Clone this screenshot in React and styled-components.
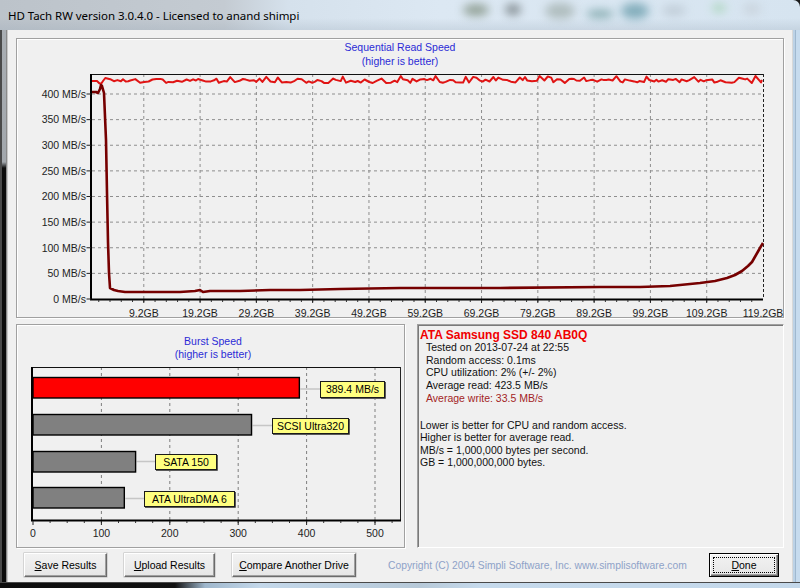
// Packages
import React from "react"
import styled, { createGlobalStyle } from "styled-components"

// Data
const rng = seed => {
    let s = seed
    return () => {
        s = (s * 1103515245 + 12345) % 2147483648
        return s / 2147483648
    }
}

const X0 = 92
const X1 = 763
const Y0 = 299
const YT = 74
const gbX = gb => X0 + (gb * (X1 - X0)) / 119.2
const mbY = mb => Y0 - mb * 0.5125

const readPoints = (() => {
    const r = rng(1234)
    const pts = [
        [92, 81],
        [97, 81],
        [99, 83],
        [101, 84],
        [103, 81],
    ]
    let x = 103
    while (x < 760) {
        x += 2 + r() * 3
        let y = 80.8 + (r() - 0.5) * 4.5
        if (r() < 0.1) y = 76 + r() * 2
        pts.push([Math.min(x, 761), y])
    }
    pts.push([762, 80])
    return pts
})()

const writePoints = [
    [92, 92], [96, 92], [98, 93], [100, 89], [101, 85], [102, 86], [104, 93],
    [106, 140], [107, 193], [108, 242], [109, 273], [110, 288], [114, 290],
    [118, 291], [125, 292], [150, 292], [180, 292], [195, 291], [200, 290],
    [203, 292], [210, 291], [240, 291], [270, 290], [300, 290], [340, 289],
    [400, 288], [500, 288], [600, 287], [640, 287], [670, 286], [700, 283],
    [715, 281], [727, 278], [735, 275], [742, 271], [748, 266], [752, 262],
    [756, 255], [760, 248], [763, 243],
]

const toPath = pts => pts.map(([x, y], i) => `${i ? "L" : "M"}${x.toFixed(1)} ${y.toFixed(1)}`).join(" ")

const BX0 = 33
const BX1 = 400
const BY0 = 520
const BYT = 367
const bx = v => BX0 + v * 0.684

const bursts = [
    { value: 389.4, top: 377, fill: "#ff0000", label: "389.4 MB/s", box: [320, 381, 64, 16] },
    { value: 319.5, top: 414, fill: "#808080", label: "SCSI Ultra320", box: [272, 418, 76, 15] },
    { value: 150, top: 451, fill: "#808080", label: "SATA 150", box: [155, 454, 61, 15] },
    { value: 133.5, top: 487, fill: "#808080", label: "ATA UltraDMA 6", box: [144, 491, 90, 15] },
]

const glows = [
    { x: 463, y: 4, w: 26, h: 12, c: "#62735a" },
    { x: 505, y: 4, w: 16, h: 11, c: "#4a5252" },
    { x: 545, y: 3, w: 30, h: 16, c: "#94a29c" },
    { x: 586, y: 10, w: 28, h: 8, c: "#4a8282" },
    { x: 621, y: 3, w: 28, h: 16, c: "#4a8898" },
    { x: 662, y: 5, w: 24, h: 11, c: "#b2bec8" },
    { x: 712, y: 4, w: 14, h: 8, c: "#8ccc96" },
    { x: 743, y: 3, w: 18, h: 12, c: "#c2cad2" },
]

// Styles
const GlobalStyle = createGlobalStyle`
    html, body {
        margin: 0;
        padding: 0;
        width: 800px;
        height: 588px;
        overflow: hidden;
        background: #1b1b1b;
    }

    body {
        font-family: "Liberation Sans", Arial, sans-serif;
    }
`

const Window = styled.div`
    width: 800px;
    height: 588px;
    display: flex;
    flex-direction: column;
    overflow: hidden;
    background: #1b1b1b;
`

const TitleBar = styled.div`
    position: relative;
    flex: none;
    height: 30px;
    display: flex;
    align-items: center;
    padding-left: 8px;
    overflow: hidden;
    border-top-right-radius: 7px;
    background:
        linear-gradient(180deg, rgba(255, 255, 255, 0) 60%, rgba(150, 165, 180, 0.25) 100%),
        linear-gradient(
            90deg,
            #bcc3ca 0%,
            #c4cbd2 28%,
            #d5e1ec 36%,
            #dce8f3 55%,
            #d6e4f0 100%
        );
`

const TitleText = styled.span`
    position: relative;
    z-index: 1;
    font-family: "Noto Sans", "Open Sans", sans-serif;
    font-size: 11.5px;
    color: #000;
    letter-spacing: -0.05px;
`

const Glow = styled.span`
    position: absolute;
    border-radius: 50%;
    filter: blur(5px);
    opacity: 0.6;
`

const Body = styled.div`
    flex: 1;
    display: flex;
    min-height: 0;
`

const LeftFrame = styled.div`
    width: 8px;
    flex: none;
    background:
        linear-gradient(90deg, #4a4a4a 0 2px, transparent 2px 6px, #8a8a8a 6px 7px, #c8c8c8 7px 8px),
        linear-gradient(180deg, #a9aeb3 0, #a2a7ac 132px, #0c0c0c 138px, #0c0c0c 100%);
`

const RightFrame = styled.div`
    width: 8px;
    flex: none;
    background:
        linear-gradient(90deg, #d8d8d8 0 1px, #bcd2e6 1px 3px, #9fb8cf 3px 4px, #c6dbee 4px 8px),
        #c6dbee;
`

const Client = styled.div`
    flex: 1;
    display: flex;
    flex-direction: column;
    padding: 8px 8px 5px 8px;
    background: #f0f0f0;
    min-width: 0;
`

const Panel = styled.div`
    box-sizing: border-box;
    flex: none;
    width: ${p => (p.$width ? `${p.$width}px` : "auto")};
    height: ${p => p.$height}px;
    border: 1px solid #a0a0a0;
    box-shadow: inset 1px 1px 0 #fff, 1px 1px 0 #fff;

    svg {
        display: block;
        overflow: visible;
    }
`

const LowerRow = styled.div`
    display: flex;
    gap: 12px;
    margin-top: 6px;
    height: 224px;
`

const InfoPanel = styled.div`
    box-sizing: border-box;
    flex: 1;
    height: 224px;
    padding: 3.7px 0 0 2px;
    border: 1px solid;
    border-color: #a0a0a0 #fff #fff #a0a0a0;
    box-shadow: inset 1px 1px 0 #7a7a7a;
    font-size: 10.5px;
    line-height: 12.6px;
    color: #111;
`

const InfoTitle = styled.div`
    font-size: 12px;
    font-weight: bold;
    color: #f00000;
`

const InfoLine = styled.div`
    padding-left: ${p => (p.$indent ? 6 : 0)}px;
    color: ${p => p.$color || "#111"};
    white-space: nowrap;
`

const Spacer = styled.div`
    height: 14.4px;
`

const Footer = styled.div`
    display: flex;
    align-items: center;
    gap: 17px;
    height: 24px;
    margin-top: 5px;
    padding: 0 5px 0 8px;
`

const Button = styled.button`
    position: relative;
    box-sizing: border-box;
    flex: none;
    width: ${p => p.$width}px;
    height: 24px;
    padding: 0;
    font-family: "Liberation Sans", Arial, sans-serif;
    font-size: 10.5px;
    color: #000;
    background: linear-gradient(180deg, #f2f2f2, #e6e6e6);
    border: 1px solid;
    border-color: ${p => (p.$default ? "#000" : "#fff #6b6b6b #6b6b6b #fff")};
    box-shadow: ${p =>
        p.$default
            ? "inset 1px 1px 0 #fff, inset -1px -1px 0 #6b6b6b, inset -2px -2px 0 #a0a0a0"
            : "inset -1px -1px 0 #a0a0a0, 0 0 0 0.5px #b8b8b8"};
    margin-left: ${p => (p.$push ? "auto" : "0")};

    &::after {
        content: "";
        display: ${p => (p.$default ? "block" : "none")};
        position: absolute;
        inset: 3px;
        border: 1px dotted #000;
    }

    u {
        text-underline-offset: 1px;
    }
`

const Copyright = styled.span`
    margin-left: 15px;
    font-size: 10.3px;
    color: #8ea2c8;
    white-space: nowrap;
`

const BottomFrame = styled.div`
    box-sizing: border-box;
    flex: none;
    height: 6px;
    border-top: 1px solid #4a4a4a;
    background: linear-gradient(
        90deg,
        #0d0d0d 0,
        #111 175px,
        #9fb7cc 205px,
        #c4d8ea 260px,
        #b7c9d8 420px,
        #c6daec 480px,
        #c4d8ea 100%
    );
`

const ChartTitle = styled.text`
    font-family: "Liberation Sans", Arial, sans-serif;
    font-size: 10.5px;
    fill: #2b2bd6;
    text-anchor: middle;
`

const AxisLabel = styled.text`
    font-family: "Liberation Sans", Arial, sans-serif;
    font-size: 10.5px;
    fill: #1e1e1e;
    text-anchor: ${p => p.$anchor || "middle"};
`

const BarLabel = styled.text`
    font-family: "Liberation Sans", Arial, sans-serif;
    font-size: 10.5px;
    fill: #000;
    text-anchor: middle;
`

// Charts
const SequentialChart = () => {
    const levels = [0, 50, 100, 150, 200, 250, 300, 350, 400]
    const gbs = [9.2, 19.2, 29.2, 39.2, 49.2, 59.2, 69.2, 79.2, 89.2, 99.2, 109.2]
    const minor = []
    for (let g = 1.2; g < 119.2; g += 2) minor.push(g)

    return (
        <svg width="766" height="278" viewBox="17 39 766 278">
            <ChartTitle x="400" y="50.8">Sequential Read Speed</ChartTitle>
            <ChartTitle x="400" y="64.8">(higher is better)</ChartTitle>

            {levels.slice(1).map(mb => (
                <line key={mb} x1={X0} x2={X1} y1={mbY(mb)} y2={mbY(mb)} stroke="#8e8e8e" strokeDasharray="3 3" />
            ))}
            {gbs.map(gb => (
                <line key={gb} x1={gbX(gb)} x2={gbX(gb)} y1={YT} y2={Y0} stroke="#8e8e8e" strokeDasharray="3 3" />
            ))}

            <line x1={X0} x2={X1} y1={YT + 0.5} y2={YT + 0.5} stroke="#111" />
            <line x1={X1 + 0.5} x2={X1 + 0.5} y1={YT} y2={Y0} stroke="#222" strokeDasharray="3 2" />

            <path d={toPath(readPoints)} fill="none" stroke="#e01414" strokeWidth="2" strokeLinejoin="round" />
            <path d={toPath(writePoints)} fill="none" stroke="#760000" strokeWidth="2.6" strokeLinejoin="round" />

            <line x1={X0 - 1} x2={X0 - 1} y1={YT} y2={Y0 + 1} stroke="#000" strokeWidth="2" />
            <line x1={X0 - 2} x2={X1} y1={Y0 + 0.5} y2={Y0 + 0.5} stroke="#000" strokeWidth="2" />

            {levels.map(mb => (
                <g key={mb}>
                    <line x1="86.5" x2={X0 - 1} y1={mbY(mb)} y2={mbY(mb)} stroke="#222" />
                    <AxisLabel $anchor="end" x="86" y={mbY(mb) + 3.8}>
                        {mb} MB/s
                    </AxisLabel>
                </g>
            ))}

            {minor.map(g => (
                <line key={g} x1={gbX(g)} x2={gbX(g)} y1={Y0 + 1} y2={Y0 + 3} stroke="#333" />
            ))}
            {gbs.map(gb => (
                <line key={gb} x1={gbX(gb)} x2={gbX(gb)} y1={Y0 + 1} y2={Y0 + 4} stroke="#222" />
            ))}

            {[...gbs, 119.2].map(gb => (
                <AxisLabel key={gb} x={gbX(gb)} y="316.8">
                    {gb}GB
                </AxisLabel>
            ))}
        </svg>
    )
}

const BurstChart = () => {
    const majors = [100, 200, 300, 400, 500]
    const minor = []
    for (let v = 25; v < 540; v += 25) minor.push(v)

    return (
        <svg width="387" height="222" viewBox="17 325 387 222">
            <ChartTitle x="213" y="344.8">Burst Speed</ChartTitle>
            <ChartTitle x="213" y="357.8">(higher is better)</ChartTitle>

            {majors.map(v => (
                <line key={v} x1={bx(v)} x2={bx(v)} y1={BYT} y2={BY0} stroke="#7e7e7e" strokeDasharray="3 3" />
            ))}

            <line x1={BX0} x2={BX1} y1={BYT + 0.5} y2={BYT + 0.5} stroke="#111" />
            <line x1={BX1 + 0.5} x2={BX1 + 0.5} y1={BYT} y2={BY0} stroke="#222" />

            {bursts.map(b => {
                const end = bx(b.value)
                const [lx, ly, lw, lh] = b.box
                const cy = ly + lh / 2
                return (
                    <g key={b.label}>
                        <line x1={end + 1} x2={lx} y1={cy} y2={cy} stroke="#c6c6c6" strokeWidth="1.5" />
                        <rect x={BX0} y={b.top + 0.5} width={end - BX0} height="20.5" fill={b.fill} stroke="#000" strokeWidth="1.4" />
                        <rect x={lx + 0.5} y={ly + 0.5} width={lw} height={lh} fill="#ffff80" stroke="#1a1a1a" />
                        <polyline
                            points={`${lx + lw + 1.5},${ly + 1} ${lx + lw + 1.5},${ly + lh + 1.5} ${lx + 1},${ly + lh + 1.5}`}
                            fill="none"
                            stroke="#5a5a5a"
                        />
                        <BarLabel x={lx + lw / 2 + 0.5} y={cy + 4}>
                            {b.label}
                        </BarLabel>
                    </g>
                )
            })}

            <line x1={BX0 - 1} x2={BX0 - 1} y1={BYT} y2={BY0 + 1} stroke="#000" strokeWidth="2" />
            <line x1={BX0 - 2} x2={BX1 + 1} y1={BY0 + 0.5} y2={BY0 + 0.5} stroke="#000" strokeWidth="2" />

            {minor.map(v => (
                <line key={v} x1={bx(v)} x2={bx(v)} y1={BY0 + 1} y2={BY0 + 3} stroke="#333" />
            ))}
            {[0, ...majors].map(v => (
                <g key={v}>
                    <line x1={bx(v)} x2={bx(v)} y1={BY0 + 1} y2={BY0 + 5} stroke="#222" />
                    <AxisLabel x={bx(v)} y="536.8">
                        {v}
                    </AxisLabel>
                </g>
            ))}
        </svg>
    )
}

const App = () => {
    return (
        <>
            <GlobalStyle />
            <Window>
                <TitleBar>
                    {glows.map(g => (
                        <Glow
                            key={g.x}
                            style={{ left: g.x, top: g.y, width: g.w, height: g.h, background: g.c }}
                        />
                    ))}
                    <TitleText>HD Tach RW version 3.0.4.0 - Licensed to anand shimpi</TitleText>
                </TitleBar>

                <Body>
                    <LeftFrame />

                    <Client>
                        <Panel $height={280}>
                            <SequentialChart />
                        </Panel>

                        <LowerRow>
                            <Panel $width={389} $height={224}>
                                <BurstChart />
                            </Panel>

                            <InfoPanel>
                                <InfoTitle>ATA Samsung SSD 840 AB0Q</InfoTitle>
                                <InfoLine $indent>Tested on 2013-07-24 at 22:55</InfoLine>
                                <InfoLine $indent>Random access: 0.1ms</InfoLine>
                                <InfoLine $indent>CPU utilization: 2% (+/- 2%)</InfoLine>
                                <InfoLine $indent>Average read: 423.5 MB/s</InfoLine>
                                <InfoLine $indent $color="#a32424">
                                    Average write: 33.5 MB/s
                                </InfoLine>
                                <Spacer />
                                <InfoLine>Lower is better for CPU and random access.</InfoLine>
                                <InfoLine>Higher is better for average read.</InfoLine>
                                <InfoLine>MB/s = 1,000,000 bytes per second.</InfoLine>
                                <InfoLine>GB = 1,000,000,000 bytes.</InfoLine>
                            </InfoPanel>
                        </LowerRow>

                        <Footer>
                            <Button $width={83}>
                                <u>S</u>ave Results
                            </Button>
                            <Button $width={91}>
                                <u>U</u>pload Results
                            </Button>
                            <Button $width={124}>
                                <u>C</u>ompare Another Drive
                            </Button>
                            <Copyright>Copyright (C) 2004 Simpli Software, Inc. www.simplisoftware.com</Copyright>
                            <Button $width={70} $default $push>
                                <u>D</u>one
                            </Button>
                        </Footer>
                    </Client>

                    <RightFrame />
                </Body>

                <BottomFrame />
            </Window>
        </>
    )
}

export default App
